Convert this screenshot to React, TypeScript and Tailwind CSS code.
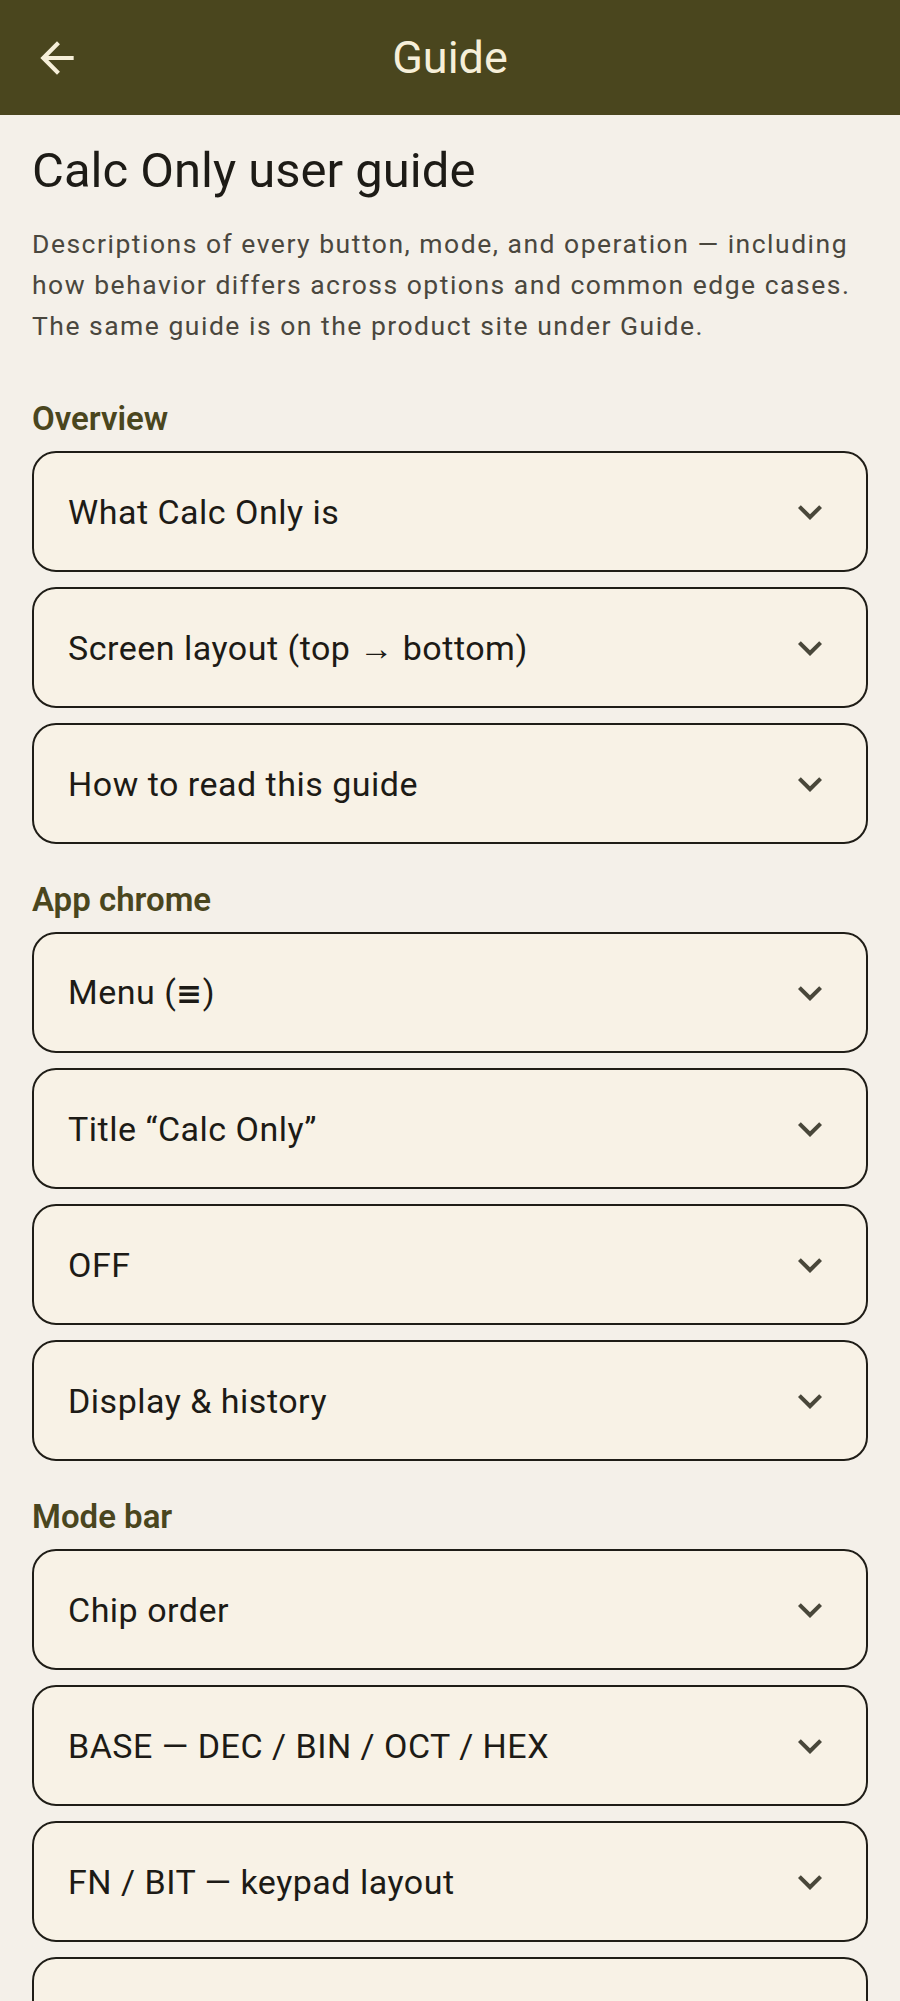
import React from 'react';

interface Section {
  title: string;
  items: React.ReactNode[];
}

const MenuGlyph = () => (
  <span className="font-['DejaVu_Sans',_sans-serif] font-bold text-[31px]">{'\u2261'}</span>
);

const sections: Section[] = [
  {
    title: 'Overview',
    items: ['What Calc Only is', 'Screen layout (top \u2192 bottom)', 'How to read this guide'],
  },
  {
    title: 'App chrome',
    items: [
      <>
        Menu (<MenuGlyph />)
      </>,
      'Title \u201cCalc Only\u201d',
      'OFF',
      'Display & history',
    ],
  },
  {
    title: 'Mode bar',
    items: [
      'Chip order',
      'BASE \u2014 DEC / BIN / OCT / HEX',
      'FN / BIT \u2014 keypad layout',
      'ANGLE \u2014 DEG / RAD',
      'Memory chips',
    ],
  },
];

const BackArrow = () => (
  <svg viewBox="0 0 24 24" className="w-[50px] h-[50px]" fill="#f6efd9">
    <path d="M20 11H7.83l5.59-5.59L12 4l-8 8 8 8 1.41-1.41L7.83 13H20v-2z" />
  </svg>
);

const Chevron = () => (
  <svg viewBox="0 0 24 24" className="w-[48px] h-[48px] shrink-0" fill="#49473a">
    <path d="M16.59 8.59L12 13.17 7.41 8.59 6 10l6 6 6-6z" />
  </svg>
);

const GuideItem = ({ label }: { label: React.ReactNode }) => (
  <button className="w-full h-[121px] flex items-center justify-between pl-[34px] pr-[32px] bg-[#f8f2e6] border-2 border-[#1f1d17] rounded-[24px] text-left">
    <span className="text-[34px] leading-[40px] tracking-[0.5px] text-[#1d1b16]">{label}</span>
    <Chevron />
  </button>
);

export default function App() {
  return (
    <div className="min-h-screen bg-[#f4f0e9] font-['Roboto',_'Noto_Sans',_sans-serif]">
      <header className="h-[115px] bg-[#4a461e] flex items-center px-[32px] relative">
        <BackArrow />
        <h1 className="absolute left-0 right-0 text-center text-[45px] leading-[52px] text-[#f6efd9] pointer-events-none">
          Guide
        </h1>
      </header>

      <main className="px-[32px] pt-[28px] pb-[40px] flex flex-col">
        <h2 className="text-[49px] leading-[56px] text-[#1d1b16]">Calc Only user guide</h2>
        <p className="mt-[24px] text-[26.5px] leading-[41px] tracking-[1.5px] text-[#4a473e]">
          Descriptions of every button, mode, and operation — including how behavior differs across options and
          common edge cases. The same guide is on the product site under Guide.
        </p>

        <div className="flex flex-col gap-[36px] mt-[53px]">
          {sections.map((s) => (
            <section key={s.title} className="flex flex-col">
              <h3 className="mb-[12px] text-[33px] leading-[40px] font-semibold text-[#4a461e]">{s.title}</h3>
              <div className="flex flex-col gap-[15px]">
                {s.items.map((item, i) => (
                  <GuideItem key={i} label={item} />
                ))}
              </div>
            </section>
          ))}
        </div>
      </main>
    </div>
  );
}
